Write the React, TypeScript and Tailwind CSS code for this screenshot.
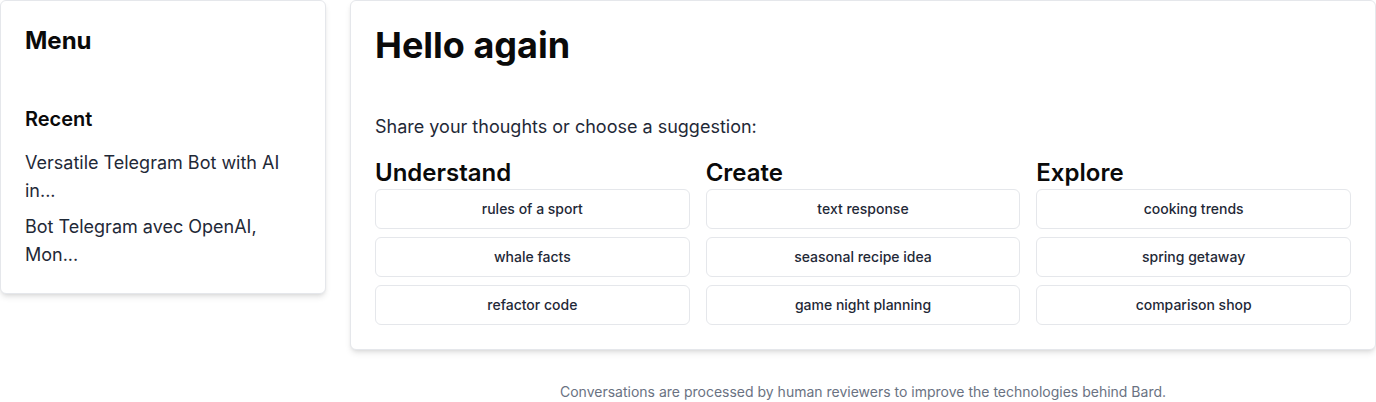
import React from "react";

const columns = [
  { title: "Understand", items: ["rules of a sport", "whale facts", "refactor code"] },
  { title: "Create", items: ["text response", "seasonal recipe idea", "game night planning"] },
  { title: "Explore", items: ["cooking trends", "spring getaway", "comparison shop"] },
];

export default function App() {
  return (
    <div
      className="w-[1376px] h-[402px] bg-white text-[#111827] overflow-hidden"
      style={{ fontFamily: "Inter, 'Noto Sans', sans-serif" }}
    >
      <div className="grid grid-cols-4 gap-6 items-start">
        <div className="col-span-1 bg-white border border-gray-200 rounded-md shadow-md p-6">
          <h2 className="text-2xl font-bold text-[#0a0a0a] mb-12">Menu</h2>
          <h3 className="text-xl font-semibold text-[#0a0a0a] mb-4">Recent</h3>
          <div className="flex flex-col gap-2">
            <div className="text-lg text-[#1f2937]">Versatile Telegram Bot with AI in...</div>
            <div className="text-lg text-[#1f2937]">Bot Telegram avec OpenAI, Mon...</div>
          </div>
        </div>
        <div className="col-span-3 flex flex-col">
          <div className="bg-white border border-gray-200 rounded-md shadow-md p-6">
            <h1 className="text-4xl font-bold text-[#0a0a0a] mb-12">Hello again</h1>
            <p className="text-lg text-[#1f2937] mb-4">Share your thoughts or choose a suggestion:</p>
            <div className="grid grid-cols-3 gap-4">
              {columns.map((c) => (
                <div key={c.title} className="flex flex-col">
                  <h3 className="text-2xl font-semibold text-[#0a0a0a]">{c.title}</h3>
                  <div className="flex flex-col gap-2">
                    {c.items.map((it) => (
                      <button
                        key={it}
                        className="h-10 w-full flex items-center justify-center border border-gray-200 rounded-md bg-white text-sm font-medium text-[#1f2937]"
                      >
                        {it}
                      </button>
                    ))}
                  </div>
                </div>
              ))}
            </div>
          </div>
          <p className="mt-8 text-sm text-gray-500 text-center">
            Conversations are processed by human reviewers to improve the technologies behind Bard.
          </p>
        </div>
      </div>
    </div>
  );
}
